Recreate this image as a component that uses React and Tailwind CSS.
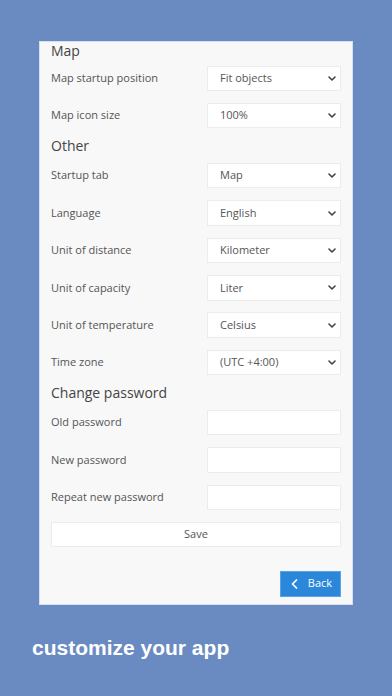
import React from 'react';

const font = { fontFamily: '"Open Sans", "Noto Sans", sans-serif' };

const Chevron = () => (
  <svg width="8" height="5" viewBox="0 0 8 5" className="shrink-0">
    <path d="M1 1l3 3 3-3" fill="none" stroke="#444" strokeWidth="1.6" strokeLinecap="round" strokeLinejoin="round" />
  </svg>
);

const SelectRow = ({ label, value }) => (
  <div className="flex items-center h-[37.4px]">
    <div className="flex-1 text-[11px] text-[#555]">{label}</div>
    <div className="w-[134px] h-[25.5px] bg-white border border-[#ececec] flex items-center justify-between pl-[12px] pr-[4px] text-[11px] text-[#555]">
      <span>{value}</span>
      <Chevron />
    </div>
  </div>
);

const InputRow = ({ label }) => (
  <div className="flex items-center h-[37.4px]">
    <div className="flex-1 text-[11px] text-[#555]">{label}</div>
    <div className="w-[134px] h-[25.5px] bg-white border border-[#ececec]" />
  </div>
);

const Heading = ({ children }) => (
  <div className="h-[22.6px] flex items-center text-[14px] text-[#444]">{children}</div>
);

export default function App() {
  return (
    <div className="w-[392px] h-[696px] bg-[#6a8bc2] overflow-hidden" style={font}>
      <div className="ml-[39px] mt-[41px] w-[314px] h-[564px] bg-[#f8f8f8] border border-[#d6def0]">
        <div className="px-[11px]">
          <div className="h-[17.6px] flex items-center text-[14px] leading-[17px] text-[#444]">Map</div>
          <SelectRow label="Map startup position" value="Fit objects" />
          <SelectRow label="Map icon size" value="100%" />
          <Heading>Other</Heading>
          <SelectRow label="Startup tab" value="Map" />
          <SelectRow label="Language" value="English" />
          <SelectRow label="Unit of distance" value="Kilometer" />
          <SelectRow label="Unit of capacity" value="Liter" />
          <SelectRow label="Unit of temperature" value="Celsius" />
          <SelectRow label="Time zone" value="(UTC +4:00)" />
          <Heading>Change password</Heading>
          <InputRow label="Old password" />
          <InputRow label="New password" />
          <InputRow label="Repeat new password" />
          <div className="mt-[5.6px] h-[25.5px] bg-white border border-[#ececec] flex items-center justify-center text-[11px] text-[#555]">
            Save
          </div>
          <div className="flex justify-end mt-[23.5px]">
            <div className="w-[61px] h-[26px] bg-[#2b87d9] border border-[#5ea2e3] flex items-center justify-center gap-[10px] pl-[2px] text-[11px] text-white">
              <svg width="7" height="10" viewBox="0 0 7 10">
                <path d="M5.5 1L1.5 5l4 4" fill="none" stroke="white" strokeWidth="1.7" strokeLinecap="round" strokeLinejoin="round" />
              </svg>
              <span>Back</span>
            </div>
          </div>
        </div>
      </div>
      <div
        className="ml-[32px] mt-[31px] text-[21px] leading-[24px] font-bold text-white"
        style={{ fontFamily: '"Liberation Sans", Arial, sans-serif' }}
      >
        customize your app
      </div>
    </div>
  );
}
